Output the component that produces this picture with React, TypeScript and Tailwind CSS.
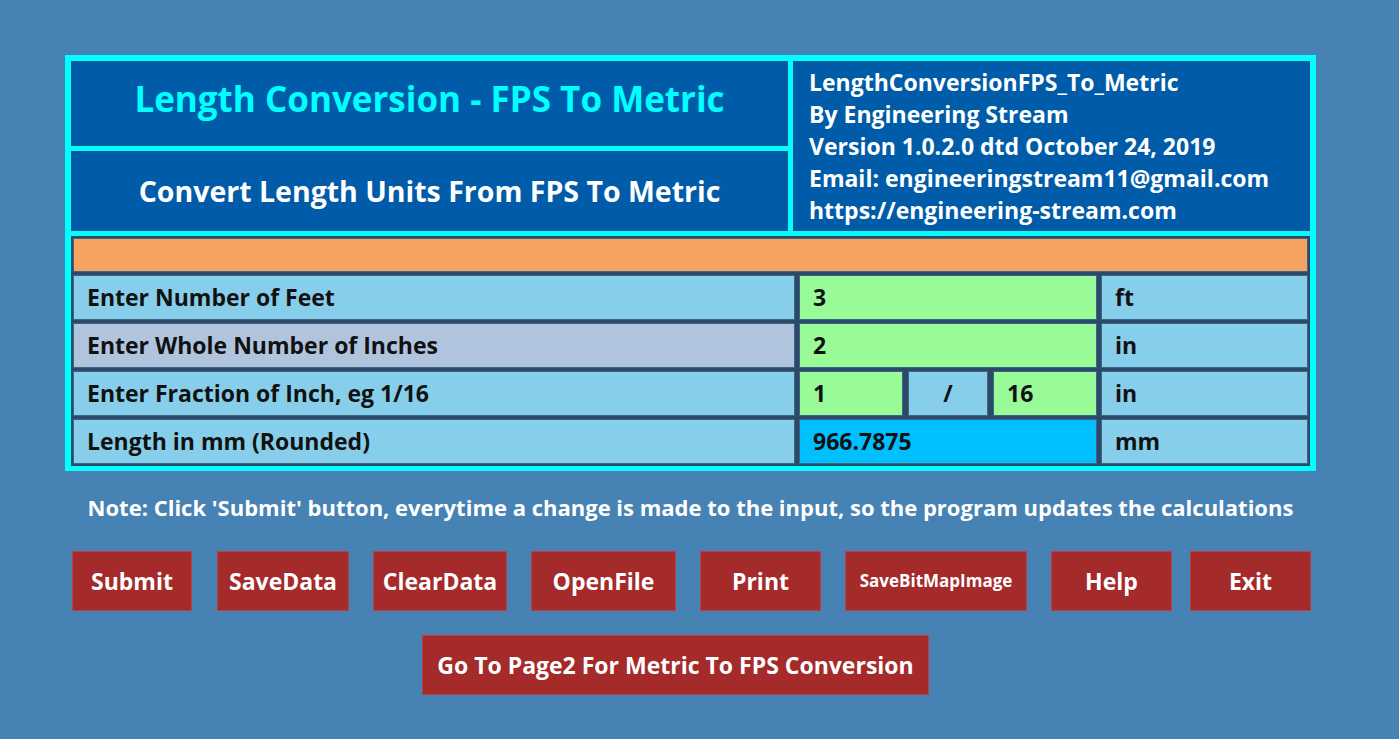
const INFO = [
  "LengthConversionFPS_To_Metric",
  "By Engineering Stream",
  "Version 1.0.2.0 dtd October 24, 2019",
  "Email: engineeringstream11@gmail.com",
  "https://engineering-stream.com",
];

const BUTTONS = [
  { label: "Submit", width: "w-[120px]", gap: "ml-0", small: false },
  { label: "SaveData", width: "w-[132px]", gap: "ml-[25px]", small: false },
  { label: "ClearData", width: "w-[134px]", gap: "ml-[24px]", small: false },
  { label: "OpenFile", width: "w-[145px]", gap: "ml-[24px]", small: false },
  { label: "Print", width: "w-[121px]", gap: "ml-[24px]", small: false },
  { label: "SaveBitMapImage", width: "w-[182px]", gap: "ml-[24px]", small: true },
  { label: "Help", width: "w-[121px]", gap: "ml-[24px]", small: false },
  { label: "Exit", width: "w-[121px]", gap: "ml-[18px]", small: false },
];

function Cell({ bg, children, center }: { bg: string; children?: React.ReactNode; center?: boolean }) {
  return (
    <div
      className={`flex items-center border border-[#3a6688] ${bg} ${
        center ? "justify-center" : "pl-[13px]"
      } text-[23px] text-[#111111]`}
    >
      {children}
    </div>
  );
}

export default function App() {
  return (
    <div className="min-h-[739px] w-full bg-[#4682b4] pt-[55px] pl-[65px] font-['Open_Sans','Noto_Sans',sans-serif] font-bold">
      {/* Main frame */}
      <div className="w-[1251px] bg-[#00ffff] p-[6px] pb-[5px]">
        {/* Header */}
        <div className="flex gap-[5px]">
          <div className="flex w-[717px] flex-col gap-[5px]">
            <div className="flex h-[85px] items-center justify-center border border-[#1f5a8e] bg-[#005ca8] pb-[8px] text-[35px] text-[#00ffff]">
              Length Conversion - FPS To Metric
            </div>
            <div className="flex h-[80px] items-center justify-center border border-[#1f5a8e] bg-[#005ca8] text-[28.5px] text-white">
              Convert Length Units From FPS To Metric
            </div>
          </div>
          <div className="flex-1 border border-[#1f5a8e] bg-[#005ca8] pl-[15px] pt-[4px] text-[23px] leading-[32px] text-white">
            {INFO.map((line) => (
              <div key={line}>{line}</div>
            ))}
          </div>
        </div>

        {/* Table */}
        <div className="mt-[5px] flex flex-col gap-[3px] bg-[#2c4a68] p-[2px]">
          <div className="h-[34px] border border-[#3a6688] bg-[#f4a460]" />
          <div className="grid h-[45px] grid-cols-[722px_298px_1fr] gap-x-[4px]">
            <Cell bg="bg-[#87ceeb]">Enter Number of Feet</Cell>
            <Cell bg="bg-[#98fb98]">3</Cell>
            <Cell bg="bg-[#87ceeb]">ft</Cell>
          </div>
          <div className="grid h-[45px] grid-cols-[722px_298px_1fr] gap-x-[4px]">
            <Cell bg="bg-[#b0c4de]">Enter Whole Number of Inches</Cell>
            <Cell bg="bg-[#98fb98]">2</Cell>
            <Cell bg="bg-[#87ceeb]">in</Cell>
          </div>
          <div className="grid h-[45px] grid-cols-[722px_298px_1fr] gap-x-[4px]">
            <Cell bg="bg-[#87ceeb]">Enter Fraction of Inch, eg 1/16</Cell>
            <div className="grid grid-cols-[104px_80px_104px] gap-x-[5px]">
              <Cell bg="bg-[#98fb98]">1</Cell>
              <Cell bg="bg-[#87ceeb]" center>
                /
              </Cell>
              <Cell bg="bg-[#98fb98]">16</Cell>
            </div>
            <Cell bg="bg-[#87ceeb]">in</Cell>
          </div>
          <div className="grid h-[45px] grid-cols-[722px_298px_1fr] gap-x-[4px]">
            <Cell bg="bg-[#87ceeb]">Length in mm (Rounded)</Cell>
            <Cell bg="bg-[#00bfff]">966.7875</Cell>
            <Cell bg="bg-[#87ceeb]">mm</Cell>
          </div>
        </div>
      </div>

      {/* Note */}
      <div className="mt-[21px] w-[1251px] text-center text-[22px] leading-[30px] text-white">
        Note: Click 'Submit' button, everytime a change is made to the input, so the program updates the calculations
      </div>

      {/* Buttons */}
      <div className="mt-[29px] ml-[7px] flex">
        {BUTTONS.map((b) => (
          <button
            key={b.label}
            className={`${b.width} ${b.gap} flex h-[60px] items-center justify-center border border-[#b8404a] bg-[#a52a2a] text-white ${
              b.small ? "text-[17px]" : "text-[23px]"
            }`}
          >
            {b.label}
          </button>
        ))}
      </div>
      <div className="mt-[24px] ml-[357px]">
        <button className="flex h-[60px] w-[507px] items-center justify-center border border-[#b8404a] bg-[#a52a2a] text-[23px] text-white">
          Go To Page2 For Metric To FPS Conversion
        </button>
      </div>
    </div>
  );
}
